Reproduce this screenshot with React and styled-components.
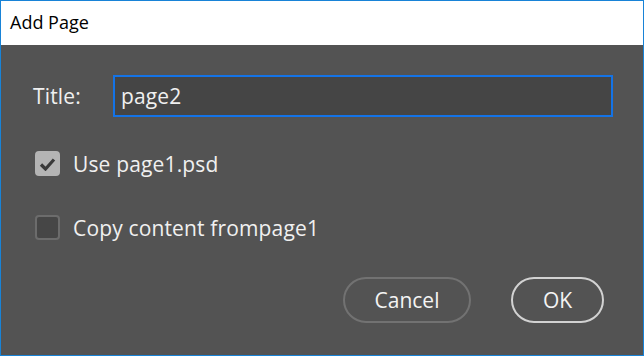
import React from 'react';
import styled, { createGlobalStyle } from 'styled-components';

const GlobalStyle = createGlobalStyle`
	html, body {
		margin: 0;
		padding: 0;
		background: #ffffff;
	}
`

const Window = styled.div`
	width: 644px;
	height: 356px;
	box-sizing: border-box;
	border: 1px solid #1883d7;
	display: flex;
	flex-direction: column;
	background: #535353;
`

const TitleBar = styled.div`
	height: 44px;
	flex: none;
	background: #ffffff;
	color: #000000;
	font-family: "Open Sans", "Noto Sans", sans-serif;
	font-size: 18px;
	display: flex;
	align-items: center;
	padding-left: 9px;
	padding-bottom: 2px;
	box-sizing: border-box;
`

const Body = styled.div`
	flex: 1;
	display: flex;
	flex-direction: column;
	padding: 30px 30px 32px 32px;
	color: #f0f0f0;
	font-family: "Open Sans", "Noto Sans", sans-serif;
	font-size: 21px;
	letter-spacing: 0.15px;
`

const FieldRow = styled.div`
	display: flex;
	align-items: center;
	height: 42px;
`

const Label = styled.label`
	width: 80px;
`

const Input = styled.div`
	flex: 1;
	height: 42px;
	box-sizing: border-box;
	border: 2px solid #1473e6;
	background: #454545;
	display: flex;
	align-items: center;
	padding-left: 6px;
`

const CheckRow = styled.div`
	display: flex;
	align-items: center;
	gap: 13px;
	margin-left: 2px;
	margin-top: ${p => p.$top}px;
	height: 25px;
`

const Box = styled.div`
	width: 25px;
	height: 25px;
	box-sizing: border-box;
	border-radius: 4px;
	border: 2px solid ${p => (p.$checked ? '#b4b4b4' : '#6c6c6c')};
	background: ${p => (p.$checked ? '#b4b4b4' : '#464646')};
	display: flex;
	align-items: center;
	justify-content: center;
`

const Actions = styled.div`
	margin-top: auto;
	display: flex;
	justify-content: flex-end;
	gap: 40px;
	padding-right: 9px;
`

const Button = styled.button`
	height: 46px;
	width: ${p => p.$width}px;
	box-sizing: border-box;
	border-radius: 23px;
	border: 2px solid ${p => (p.$primary ? '#d2d2d2' : '#727272')};
	background: transparent;
	color: #f4f4f4;
	font-family: "Open Sans", "Noto Sans", sans-serif;
	font-size: 21px;
	padding: 0;
`

function Check() {
	return (
		<svg width="17" height="14" viewBox="0 0 17 14">
			<path d="M2 7.5 L6.5 12 L15 2.5" fill="none" stroke="#3a3a3a" strokeWidth="3.2" strokeLinejoin="miter" />
		</svg>
	)
}

export default function App() {
	return (
		<>
			<GlobalStyle />
			<Window>
				<TitleBar>Add Page</TitleBar>
				<Body>
					<FieldRow>
						<Label>Title:</Label>
						<Input>page2</Input>
					</FieldRow>
					<CheckRow $top={34}>
						<Box $checked><Check /></Box>
						<span>Use page1.psd</span>
					</CheckRow>
					<CheckRow $top={39}>
						<Box />
						<span>Copy content frompage1</span>
					</CheckRow>
					<Actions>
						<Button $width={128}>Cancel</Button>
						<Button $width={93} $primary>OK</Button>
					</Actions>
				</Body>
			</Window>
		</>
	)
}
